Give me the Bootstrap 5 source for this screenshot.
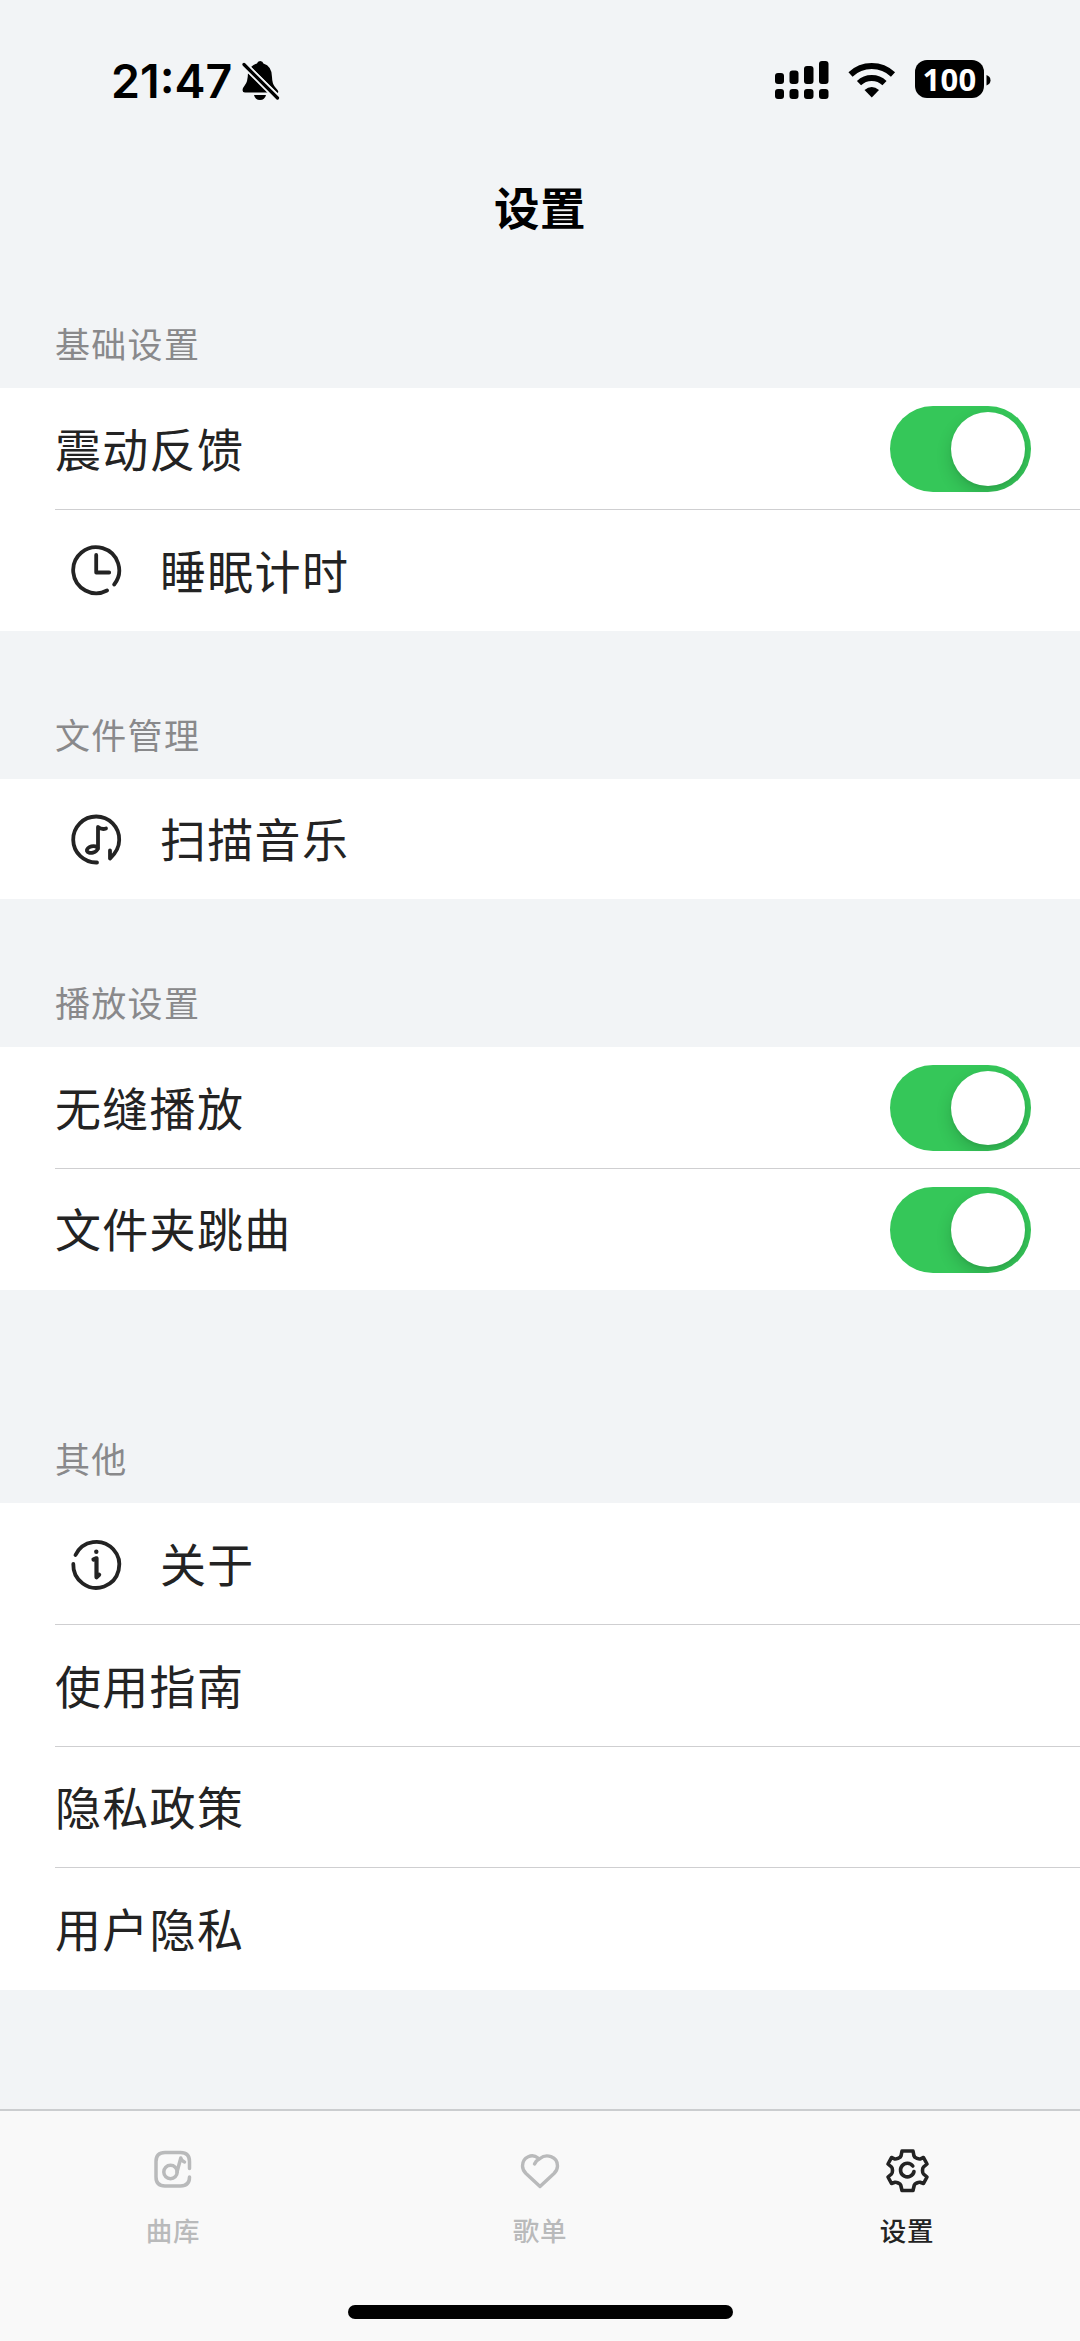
<!DOCTYPE html>
<html lang="zh-CN">
<head>
<meta charset="utf-8">
<meta name="viewport" content="width=device-width, initial-scale=1">
<title>设置</title>
<link rel="stylesheet" href="https://cdn.jsdelivr.net/npm/bootstrap@5.3.0/dist/css/bootstrap.min.css">
<style>
  body { background:#f2f4f6; color:#232323; font-family:"Noto Sans CJK SC",sans-serif; width:1080px; height:2341px; overflow:hidden; }
  svg { display:block; flex:none; }
  .status-bar { height:160px; padding:1px 88px 0 111px; }
  .clock { font:600 46.5px/60px Inter,"Liberation Sans",sans-serif; letter-spacing:0; color:#000; }
  .bell-off { margin-left:8px; }
  .battery-level { width:69px; height:38px; border-radius:12px; background:#000; color:#fff; font:700 31px/38px "Noto Sans",sans-serif; letter-spacing:.2px; margin-top:-3px; }
  .page-title { height:98px; font-size:45.5px; font-weight:700; line-height:92px; letter-spacing:.6px; color:#000; }
  .section-label { font-size:35px; letter-spacing:1.3px; line-height:52px; color:#89898b; padding:0 0 19px 55px; height:147.5px; }
  .section-label.first { height:130px; }
  .section-label.far { height:213px; }
  .setting-list { --bs-list-group-border-radius:0; --bs-list-group-border-width:0; background:#fff; }
  .setting-list .setting-row { display:flex; align-items:center; height:121.7px; margin-left:55px; padding:0 49px 0 0; font-size:46px; letter-spacing:1.3px; color:#232323; background:#fff; border:0; }
  .setting-list.single .setting-row { height:120.5px; }
  .setting-row > span { padding-bottom:3px; }
  .setting-row + .setting-row { box-shadow:0 -1px 0 #cfcfd1; }
  .row-icon { width:56px; height:56px; margin:1px 36px 0 13px; }
  .ios-switch { padding:1px 0 0; margin:0; min-height:0; line-height:0; }
  .ios-switch .form-check-input { width:141px; height:86px; margin:0; border:0; border-radius:43px; position:relative; display:block; float:none; }
  .ios-switch .form-check-input:checked { background:#35c759; }
  .ios-switch .form-check-input::after { content:""; position:absolute; right:6px; top:6px; width:74px; height:74px; border-radius:50%; background:#fff; box-shadow:0 7px 16px rgba(0,0,0,.16),0 2px 3px rgba(0,0,0,.05); clip-path:inset(-6px -6px -6px -40px round 43px); }
  .tab-bar { height:232px; background:#f9f9f9; border-top:2px solid #cbcdcf; }
  .tab-bar .tab-item { width:367px; padding:34px 0 0; color:#b9babb; font-size:26.5px; font-weight:500; line-height:40px; letter-spacing:.8px; gap:13px; }
  .tab-bar .tab-item.current { color:#232323; }
  .tab-bar .tab-item.edge { width:346px; }
  .home-indicator { width:385px; height:14px; border-radius:7px; background:#000; bottom:22px; left:348px; }
</style>
<script src="https://cdn.jsdelivr.net/npm/bootstrap@5.3.0/dist/js/bootstrap.bundle.min.js"></script>
</head>
<body class="d-flex flex-column">
<header>
  <div class="status-bar d-flex align-items-center justify-content-between">
    <div class="d-flex align-items-center">
      <span class="clock">21:47</span>
      <svg class="bell-off" width="40" height="42" viewBox="240 60 40 42">
        <path d="M251 67q3-3 6-3.500q.5-2.500 3.200-2.500t3.200 2.500q8.500 2.500 8.600 13.500q.2 7 3 10l2.500 3q1.500 2 0 3Z"/>
        <path d="M248 73q-.3 9-3 12l-2 3q-1.500 4.500 2 4.500h23Z"/>
        <path d="M254 95h12q-1.200 5-6 5t-6-5Z"/>
        <path d="M244 64.500 277.500 98" stroke="#f2f4f6" stroke-width="6.800"/>
        <path d="M244 64.500 277.500 98" stroke="#000" stroke-width="3.200" stroke-linecap="round"/>
      </svg>
    </div>
    <div class="d-flex align-items-center">
      <svg width="141" height="42" viewBox="774 60 141 42">
        <rect x="775" y="73" width="9" height="11" rx="3"/><rect x="789.500" y="70.500" width="9" height="13.500" rx="3"/><rect x="804" y="66" width="9.500" height="18" rx="3"/><rect x="819" y="61" width="9.500" height="23" rx="3"/>
        <rect x="775" y="89" width="9" height="10" rx="3"/><rect x="789.500" y="89" width="9" height="10" rx="3"/><rect x="804" y="89" width="9.500" height="10" rx="3"/><rect x="819" y="89" width="9.500" height="10" rx="3"/>
        <path d="M850.500 74.500a31 31 0 0 1 42.500 0M859 83.200a18.500 18.500 0 0 1 25.500 0" fill="none" stroke="#000" stroke-width="6"/>
        <path d="M864.500 90q7.200-6 14.500 0l-7.200 7.500Z"/>
      </svg>
      <span class="battery-level text-center">100</span>
      <svg width="8" height="42" viewBox="984 60 8 42"><path d="M986.500 75q4 1.500 4 5.200t-4 5.200Z"/></svg>
    </div>
  </div>
  <h1 class="page-title text-center mb-0">设置</h1>
</header>
<main class="flex-grow-1">
  <div class="section-label first d-flex align-items-end">基础设置</div>
  <div class="list-group setting-list">
    <div class="list-group-item setting-row justify-content-between"><span>震动反馈</span><div class="form-check form-switch ios-switch"><input class="form-check-input" type="checkbox" role="switch" checked aria-label="震动反馈"></div></div>
    <div class="list-group-item setting-row">
      <svg class="row-icon" viewBox="68 543 56 56" fill="none" stroke="#232323" stroke-width="3.800" stroke-linecap="round" stroke-linejoin="round"><path d="M107 590.500A23 23 0 1 1 114.200 584.500M96.200 555v17.500h13"/></svg><span>睡眠计时</span></div>
  </div>
  <div class="section-label d-flex align-items-end">文件管理</div>
  <div class="list-group setting-list single">
    <div class="list-group-item setting-row">
      <svg class="row-icon" viewBox="68 811 56 56" fill="none" stroke="#232323" stroke-width="3.800" stroke-linecap="round" stroke-linejoin="round"><path d="M97 861.500A23 23 0 1 1 119.200 839Q119.200 849 110 857.500V849.500"/><ellipse cx="92.200" cy="848.500" rx="5.500" ry="3.200" transform="rotate(-14 92.200 848.500)"/><path d="M98 847.500V826q4 3 8 1.500"/></svg><span>扫描音乐</span></div>
  </div>
  <div class="section-label d-flex align-items-end">播放设置</div>
  <div class="list-group setting-list">
    <div class="list-group-item setting-row justify-content-between"><span>无缝播放</span><div class="form-check form-switch ios-switch"><input class="form-check-input" type="checkbox" role="switch" checked aria-label="无缝播放"></div></div>
    <div class="list-group-item setting-row justify-content-between"><span>文件夹跳曲</span><div class="form-check form-switch ios-switch"><input class="form-check-input" type="checkbox" role="switch" checked aria-label="文件夹跳曲"></div></div>
  </div>
  <div class="section-label far d-flex align-items-end">其他</div>
  <div class="list-group setting-list">
    <div class="list-group-item setting-row">
      <svg class="row-icon" viewBox="68 1536 56 56" fill="none" stroke="#232323" stroke-width="3.800" stroke-linecap="round" stroke-linejoin="round"><path d="M75.500 1554A23 23 0 1 1 73.300 1563"/><circle cx="96.300" cy="1550.800" r="2.200" fill="#232323" stroke="none"/><path d="M93.500 1558.500l3-1.200v19l2.600-2.600" stroke-width="4.200"/></svg><span>关于</span></div>
    <div class="list-group-item setting-row"><span>使用指南</span></div>
    <div class="list-group-item setting-row"><span>隐私政策</span></div>
    <div class="list-group-item setting-row"><span>用户隐私</span></div>
  </div>
</main>
<nav class="tab-bar d-flex justify-content-between position-relative" aria-label="主导航">
  <div class="tab-item edge d-flex flex-column align-items-center">
    <svg width="52" height="52" viewBox="147 2145 52 52" fill="none" stroke="#b9babb" stroke-width="3.500" stroke-linecap="round" stroke-linejoin="round"><path d="M189.500 2168.500v-7q0-9-9-9h-15.500q-9 0-9 9V2177q0 9 9 9h15.500q9 0 9-9"/><circle cx="170.500" cy="2172" r="6.700"/><path d="M177 2172l3.800-14q.5 2.500 3.700 4"/></svg>
    <span>曲库</span></div>
  <div class="tab-item d-flex flex-column align-items-center">
    <svg width="52" height="52" viewBox="514 2145 52 52" fill="none" stroke="#b9babb" stroke-width="3.400" stroke-linecap="round" stroke-linejoin="round"><path d="M534.500 2164Q536 2160.500 540 2158.500C546 2153.500 557.500 2156 557.500 2166Q557.500 2170 554 2173.500L540 2186.500 526 2173.500Q522.500 2170 522.500 2166C522.500 2156.500 532.500 2153.500 538 2158"/></svg>
    <span>歌单</span></div>
  <div class="tab-item edge current d-flex flex-column align-items-center">
    <svg width="52" height="52" viewBox="881 2145 52 52" fill="none" stroke="#232323" stroke-width="3.600" stroke-linecap="round" stroke-linejoin="round"><path d="M902 2151h11l1 5q.3 1.200 3 2.300t3.500.5l3-1.300 3.500 6.500-3.500 3q-1 1-1 3.500t1 3.500l3.500 3-3.500 6.500-3.500-1.200q-1-.3-3.200.7t-2.500 2l-1.300 5.500h-11l-1.300-5.500q-.3-1-2.500-2t-3.200-.7l-3.500 1.200-3.500-6.500 3.500-3q1-1 1-3.500t-1-3.500l-3.500-3 3.500-6.500 3 1.300q.8.600 3.500-.5t3-2.300Z"/><path d="M912.800 2166A6.800 6.800 0 1 0 914 2171.500"/></svg>
    <span>设置</span></div>
  <div class="home-indicator position-absolute"></div>
</nav>
</body>
</html>
